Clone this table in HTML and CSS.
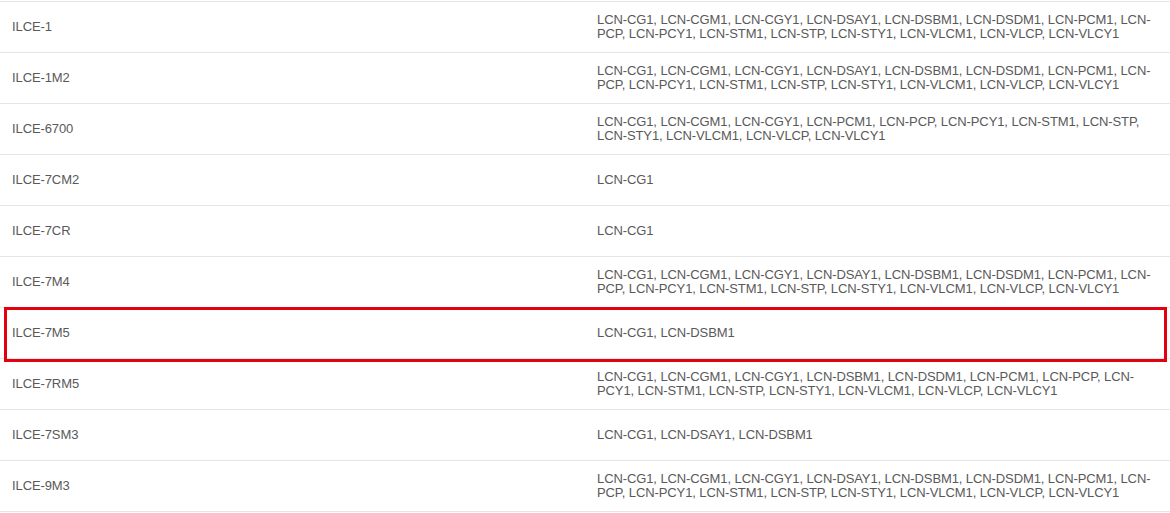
FILE: index.html
```html
<!DOCTYPE html>
<html>
<head>
<meta charset="utf-8">
<link rel="stylesheet" href="styles.css">
</head>
<body>
<div class="wrap">
<table class="compat">
<colgroup><col class="col-model"><col class="col-lens"></colgroup>
<tbody>
<tr><td>ILCE-1</td><td>LCN-CG1, LCN-CGM1, LCN-CGY1, LCN-DSAY1, LCN-DSBM1, LCN-DSDM1, LCN-PCM1, LCN-PCP, LCN-PCY1, LCN-STM1, LCN-STP, LCN-STY1, LCN-VLCM1, LCN-VLCP, LCN-VLCY1</td></tr>
<tr><td>ILCE-1M2</td><td>LCN-CG1, LCN-CGM1, LCN-CGY1, LCN-DSAY1, LCN-DSBM1, LCN-DSDM1, LCN-PCM1, LCN-PCP, LCN-PCY1, LCN-STM1, LCN-STP, LCN-STY1, LCN-VLCM1, LCN-VLCP, LCN-VLCY1</td></tr>
<tr><td>ILCE-6700</td><td>LCN-CG1, LCN-CGM1, LCN-CGY1, LCN-PCM1, LCN-PCP, LCN-PCY1, LCN-STM1, LCN-STP, LCN-STY1, LCN-VLCM1, LCN-VLCP, LCN-VLCY1</td></tr>
<tr><td>ILCE-7CM2</td><td>LCN-CG1</td></tr>
<tr><td>ILCE-7CR</td><td>LCN-CG1</td></tr>
<tr><td>ILCE-7M4</td><td>LCN-CG1, LCN-CGM1, LCN-CGY1, LCN-DSAY1, LCN-DSBM1, LCN-DSDM1, LCN-PCM1, LCN-PCP, LCN-PCY1, LCN-STM1, LCN-STP, LCN-STY1, LCN-VLCM1, LCN-VLCP, LCN-VLCY1</td></tr>
<tr><td>ILCE-7M5</td><td>LCN-CG1, LCN-DSBM1</td></tr>
<tr><td>ILCE-7RM5</td><td>LCN-CG1, LCN-CGM1, LCN-CGY1, LCN-DSBM1, LCN-DSDM1, LCN-PCM1, LCN-PCP, LCN-PCY1, LCN-STM1, LCN-STP, LCN-STY1, LCN-VLCM1, LCN-VLCP, LCN-VLCY1</td></tr>
<tr><td>ILCE-7SM3</td><td>LCN-CG1, LCN-DSAY1, LCN-DSBM1</td></tr>
<tr><td>ILCE-9M3</td><td>LCN-CG1, LCN-CGM1, LCN-CGY1, LCN-DSAY1, LCN-DSBM1, LCN-DSDM1, LCN-PCM1, LCN-PCP, LCN-PCY1, LCN-STM1, LCN-STP, LCN-STY1, LCN-VLCM1, LCN-VLCP, LCN-VLCY1</td></tr>
</tbody>
</table>
<div class="highlight"></div>
</div>
</body>
</html>
```
FILE: styles.css
```css
html, body {
  margin: 0;
  padding: 0;
  background: #fff;
}
body {
  font-family: "Liberation Sans", Arial, sans-serif;
  color: #595959;
  font-size: 13px;
}
.wrap {
  position: relative;
  padding-top: 1px;
}
.compat {
  width: 1170px;
  border-collapse: collapse;
  table-layout: fixed;
}
.col-model {
  width: 585px;
}
.col-lens {
  width: 585px;
}
.compat td {
  height: 50px;
  border-top: 1px solid #e6e6e6;
  border-bottom: 1px solid #e6e6e6;
  padding: 0 12px;
  vertical-align: middle;
  line-height: 14px;
  letter-spacing: -0.1px;
}
.highlight {
  position: absolute;
  left: 4px;
  top: 307px;
  width: 1163px;
  height: 55px;
  box-sizing: border-box;
  border: 3px solid #e3000f;
  pointer-events: none;
}
```
